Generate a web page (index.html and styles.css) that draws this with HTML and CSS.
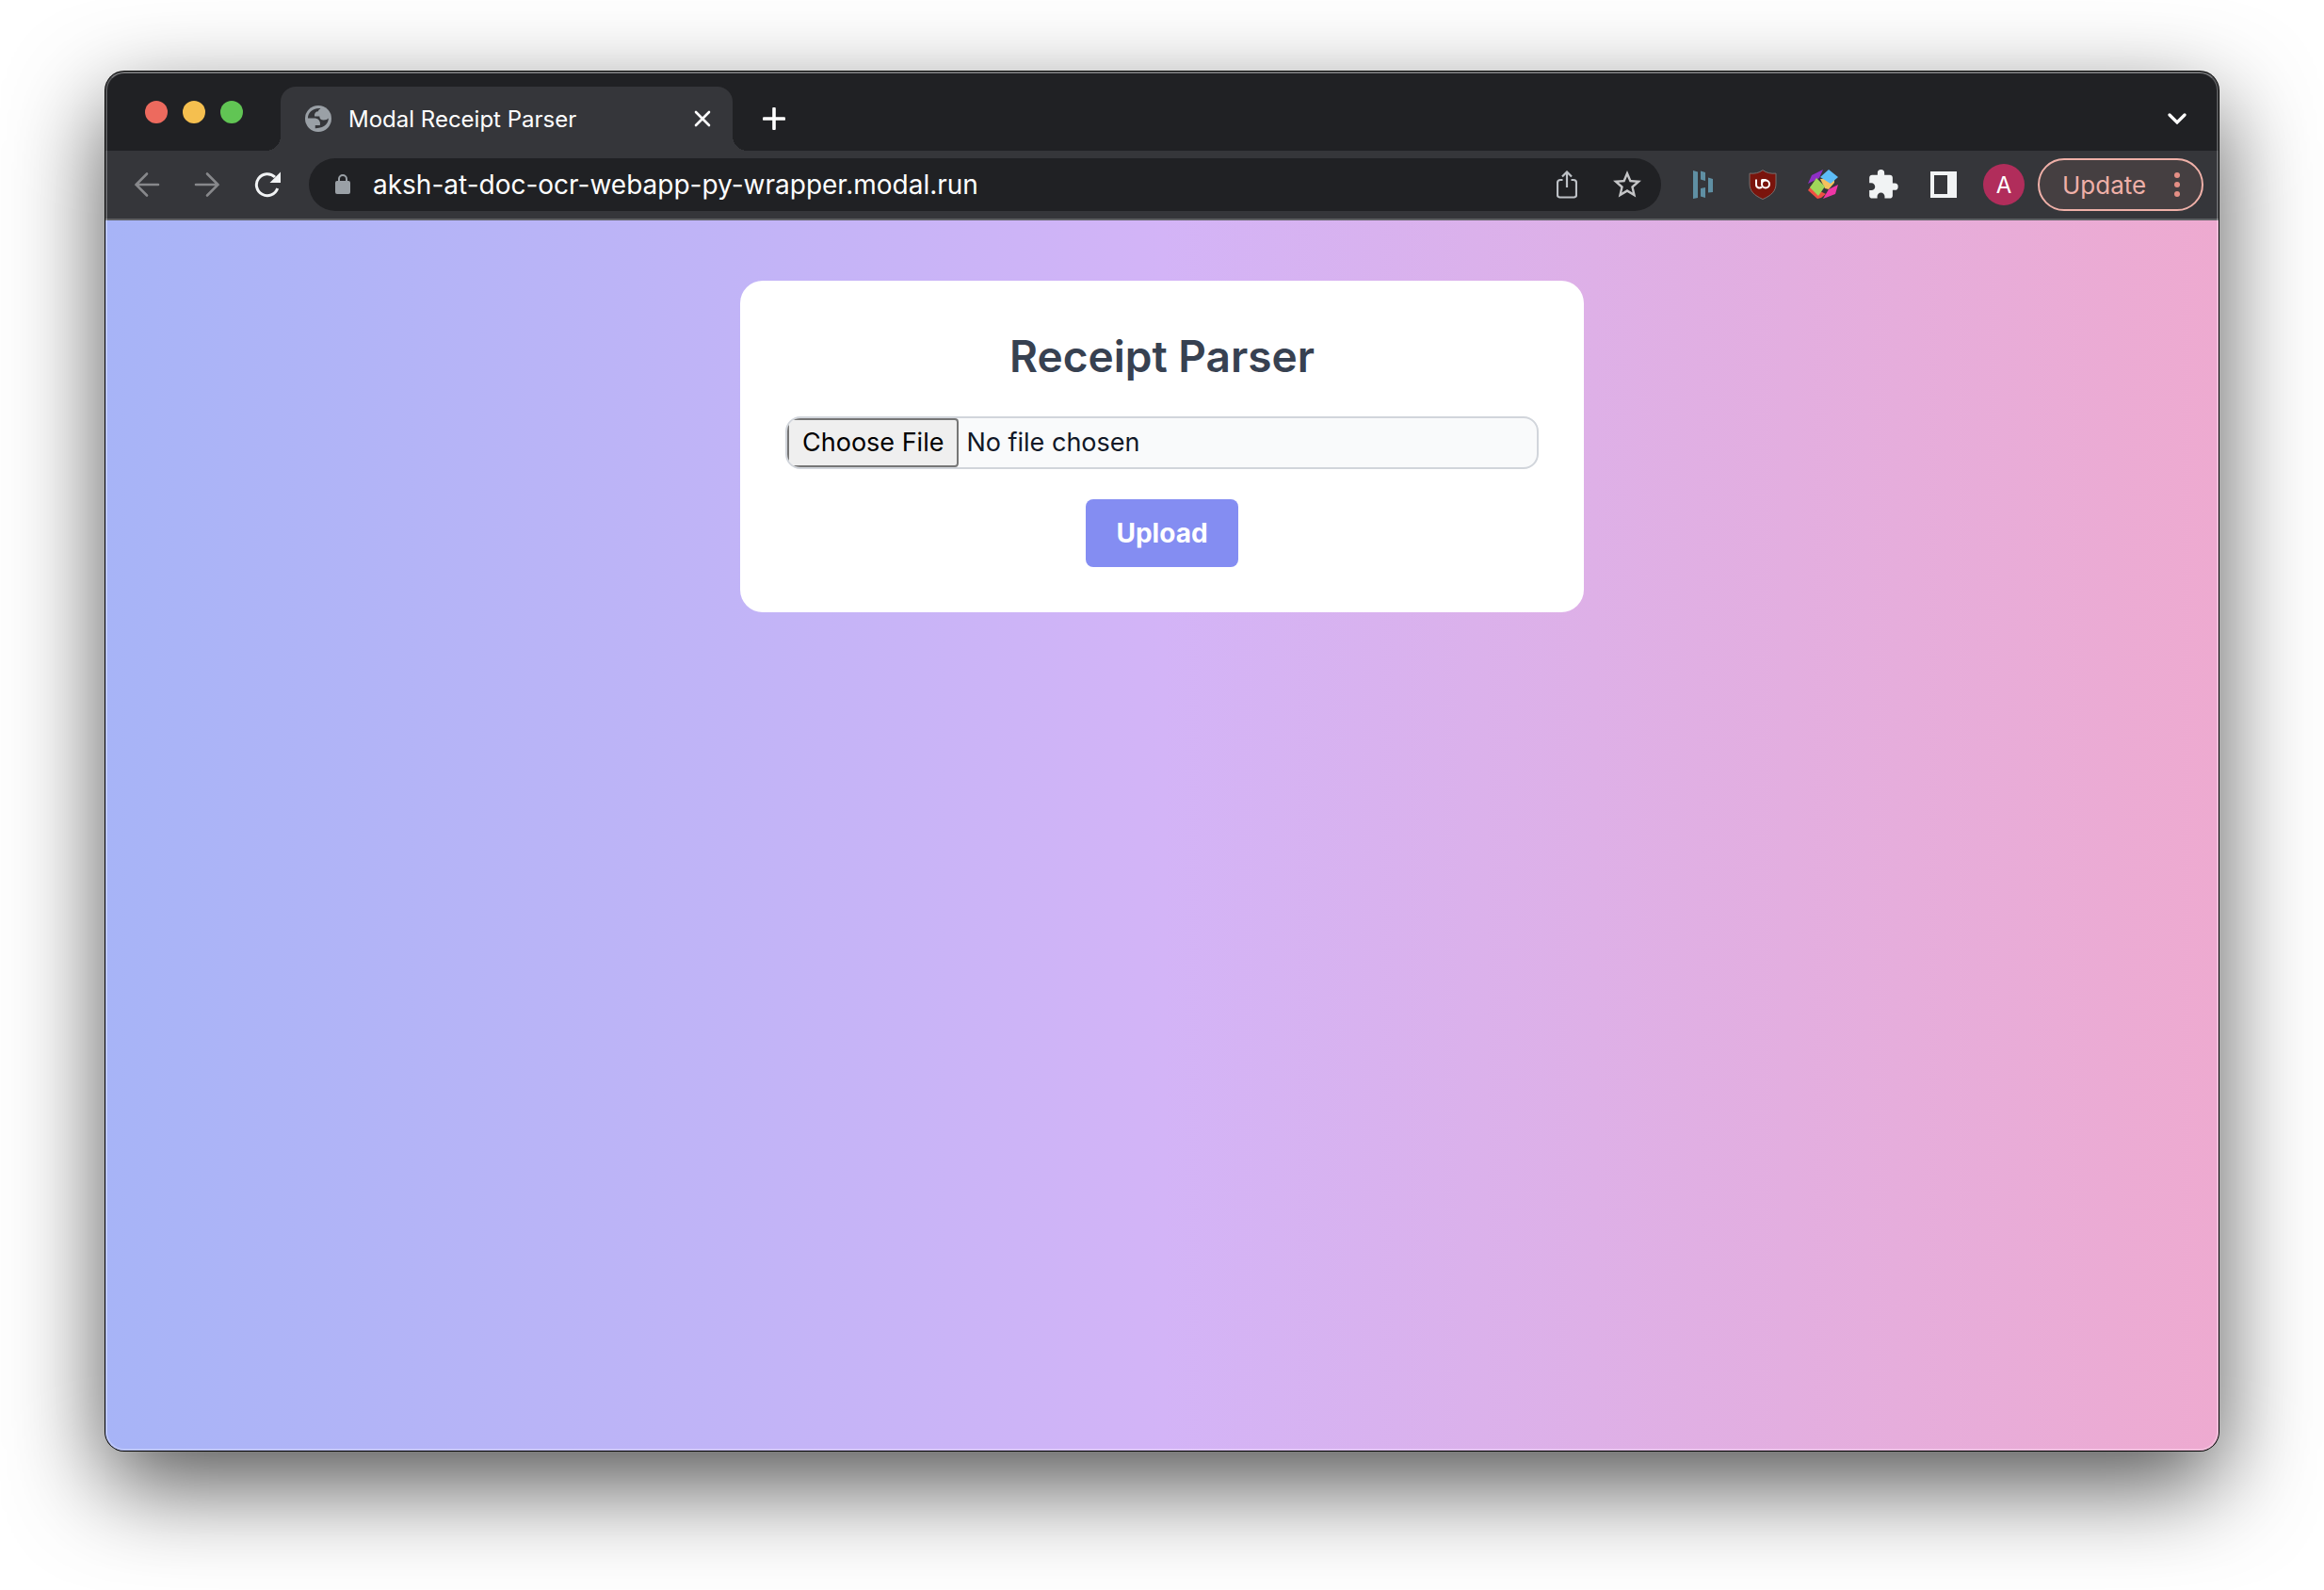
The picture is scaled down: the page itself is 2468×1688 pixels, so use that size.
FILE: index.html
```html
<!DOCTYPE html>
<html lang="en">
<head>
<meta charset="utf-8">
<title>Modal Receipt Parser</title>
<link rel="stylesheet" href="styles.css">
</head>
<body>
<div class="window">
  <header class="tabstrip">
    <div class="lights">
      <span class="light light-close"></span>
      <span class="light light-min"></span>
      <span class="light light-max"></span>
    </div>
    <div class="tab">
      <svg class="favicon" viewBox="0 0 28 28" aria-hidden="true"><circle cx="14" cy="14" r="14" fill="#9aa0a6"/><path fill="#35363a" d="M16.500 3.200C14.800 4 14 5 14 6.200c-2.800 0-4.300 2-4 5.400h5.300c0 2.700 1.600 4 4.500 4 2.300 0 4-.700 5-2C25 17.500 22 24.500 10.500 24.200V20.700h5.200c.600-4.700-1.600-7.300-6.400-7.300H2.900C3 8 8 2.400 16.500 3.200z"/><path fill="#9aa0a6" d="M3 14h6.300c4.800 0 7 2.400 6.400 7.100h-5.200v4.500C6 24 3 19 3 14z"/></svg>
      <span class="tab-title">Modal Receipt Parser</span>
      <button class="icon-button tab-close" aria-label="Close tab">
        <svg width="18" height="18" viewBox="0 0 18 18"><path d="M2 2l14 14M16 2L2 16" stroke="#fff" stroke-width="2.600" stroke-linecap="round"/></svg>
      </button>
    </div>
    <button class="icon-button new-tab" aria-label="New tab">
      <svg width="24" height="24" viewBox="0 0 24 24"><path d="M12 1.500v21M1.500 12h21" stroke="#fff" stroke-width="3.600" stroke-linecap="round"/></svg>
    </button>
    <button class="icon-button tab-search" aria-label="Search tabs">
      <svg width="20" height="12" viewBox="0 0 20 12"><path d="M2 2l8 8 8-8" fill="none" stroke="#fff" stroke-width="3.200" stroke-linecap="round"/></svg>
    </button>
  </header>
  <nav class="toolbar">
    <button class="icon-button" aria-label="Back">
      <svg width="28" height="28" viewBox="0 0 28 28"><path d="M26 14H2.500M14 2.500L2.500 14 14 25.500" fill="none" stroke="#87888b" stroke-width="2.600" stroke-linecap="round"/></svg>
    </button>
    <button class="icon-button" aria-label="Forward">
      <svg width="28" height="28" viewBox="0 0 28 28"><path d="M2 14h23.500M14 2.500L25.500 14 14 25.500" fill="none" stroke="#87888b" stroke-width="2.600" stroke-linecap="round"/></svg>
    </button>
    <button class="icon-button" aria-label="Reload">
      <svg width="28" height="28" viewBox="0 0 28 28"><path d="M24.700 18A11.500 11.500 0 1 1 22 6" fill="none" stroke="#f1f3f4" stroke-width="3"/><path d="M28 .500V12H16.500z" fill="#f1f3f4"/></svg>
    </button>
    <div class="omnibox">
      <svg width="16" height="22" viewBox="0 0 16 22" aria-hidden="true"><rect y="7" width="16" height="14" rx="2" fill="#9aa0a6"/><path d="M4 8V5a4 4 0 0 1 8 0v3" fill="none" stroke="#9aa0a6" stroke-width="2"/></svg>
      <input class="address" type="text" aria-label="Address" value="aksh-at-doc-ocr-webapp-py-wrapper.modal.run">
      <button class="icon-button" aria-label="Share">
        <svg width="22" height="30" viewBox="0 0 22 30"><path d="M6.500 10H4a3 3 0 0 0-3 3v13a2.500 2.500 0 0 0 2.500 2.500h15A2.500 2.500 0 0 0 21 26V13a3 3 0 0 0-3-3h-2.500M11 18V2M6 6.500L11 1.500l5 5" fill="none" stroke="#bdc1c6" stroke-width="2.200"/></svg>
      </button>
      <button class="icon-button" aria-label="Bookmark this page">
        <svg width="30" height="30" viewBox="2 2 20 20"><path fill="#c4c5c7" d="M22 9.240l-7.190-.620L12 2 9.190 8.630 2 9.240l5.460 4.730L5.820 21 12 17.270 18.180 21l-1.630-7.030L22 9.240zM12 15.400l-3.760 2.270 1-4.280-3.320-2.880 4.380-.380L12 6.100l1.710 4.040 4.380.380-3.320 2.880 1 4.280L12 15.400z"/></svg>
      </button>
    </div>
    <button class="icon-button" aria-label="Bars extension">
      <svg width="32" height="32" viewBox="0 0 32 32"><path fill="#5f8fa3" d="M6 1l5 1.500V30l-5 1zM14 1.500l5 1.500v9l-5-1.500zM22 8.500l5 1.500v14l-5 .500zM14 20l5-1v11l-5-1.500z"/></svg>
    </button>
    <button class="icon-button" aria-label="Content blocker">
      <svg width="32" height="32" viewBox="0 0 32 32"><path d="M16 .600c3.800 3 8.500 4 14 3.500V15c0 8-5 12.500-14 16.500C7 27.500 2 23 2 15V4.100C7.500 4.600 12.200 3.600 16 .600z" fill="#7a140c" stroke="#77706f" stroke-width="1"/><path d="M9 10.500v5.500a3.500 3.500 0 0 0 6 2.500M15 10.500v6M15 11h4.500" fill="none" stroke="#fff" stroke-width="2"/><circle cx="19" cy="15.500" r="4" fill="none" stroke="#fff" stroke-width="2"/></svg>
    </button>
    <button class="icon-button" aria-label="Color cube extension">
      <svg width="32" height="32" viewBox="0 0 32 32"><path fill="#8e2fc4" d="M0 15L4 6 16 0l-4 9z"/><path fill="#f5c15d" d="M13 10l15-1v5l-6 7-4-1z"/><path fill="#ef4f43" d="M0 22l3-4 16 8-5 4-4 1z"/><path fill="#ee36a5" d="M32 16l-3 10-13 5 6-10z"/><path fill="#5dbdf7" d="M22 0l10 8-8 7-11-7z"/><path fill="#a0d65a" d="M9 9l9 9-7 10-9-9z"/></svg>
    </button>
    <button class="icon-button" aria-label="Extensions">
      <svg width="32" height="32" viewBox="1.200 1 22 22"><path fill="#f1f3f4" d="M20.500 11H19V7c0-1.100-.900-2-2-2h-4V3.500a2.500 2.500 0 0 0-5 0V5H4c-1.100 0-1.990.900-1.990 2v3.800H3.500c1.490 0 2.700 1.210 2.700 2.700s-1.210 2.700-2.700 2.700H2V20c0 1.100.900 2 2 2h3.800v-1.500c0-1.490 1.210-2.700 2.700-2.700s2.700 1.210 2.700 2.700V22H17c1.100 0 2-.900 2-2v-4h1.500a2.500 2.500 0 0 0 0-5z"/></svg>
    </button>
    <button class="icon-button" aria-label="Side panel">
      <svg width="28" height="28" viewBox="0 0 28 28"><path fill="#f1f3f4" fill-rule="evenodd" d="M0 0h28v28H0zM4 4v20h14V4z"/></svg>
    </button>
    <button class="avatar" aria-label="Profile">A</button>
    <button class="update">Update
      <svg width="6" height="26" viewBox="0 0 6 26" aria-hidden="true"><g fill="#e58f85"><circle cx="3" cy="3" r="3"/><circle cx="3" cy="13" r="3"/><circle cx="3" cy="23" r="3"/></g></svg>
    </button>
  </nav>
  <main class="page">
    <form class="card">
      <h1 class="heading">Receipt Parser</h1>
      <input class="file" type="file" aria-label="Receipt file">
      <button class="upload" type="button">Upload</button>
    </form>
  </main>
</div>
</body>
</html>
```
FILE: styles.css
```css
* {
  box-sizing: border-box;
}

body {
  margin: 0;
  min-height: 100vh;
  padding: 76px 112px 148px;
  display: flex;
  background: #fff;
  font-family: Inter, "Liberation Sans", sans-serif;
}

button,
input {
  font: inherit;
  color: inherit;
}

button {
  border: 0;
  padding: 0;
  background: none;
}

svg {
  display: block;
}

.window {
  position: relative;
  flex: 1;
  display: flex;
  flex-direction: column;
  border-radius: 20px;
  overflow: hidden;
  background: #35363a;
  box-shadow: 0 0 0 1px #000, 0 36px 100px rgba(0, 0, 0, 0.68);
}

/* light rim along the inside of the window edge */
.window::after {
  content: "";
  position: absolute;
  inset: 0;
  border: 2px solid rgba(255, 255, 255, 0.24);
  border-top-color: rgba(255, 255, 255, 0.36);
  border-radius: 20px;
  pointer-events: none;
}

.tabstrip {
  height: 84px;
  padding: 16px 34px 0 42px;
  display: flex;
  align-items: stretch;
  background: #202124;
  color: #fff;
}

.lights {
  width: 144px;
  padding-top: 15px;
  display: flex;
  gap: 16px;
}

.light {
  width: 24px;
  height: 24px;
  border-radius: 50%;
}

.light-close { background: #ed6a5e; }
.light-min { background: #f5bf4f; }
.light-max { background: #61c554; }

.tab {
  position: relative;
  width: 480px;
  padding: 0 22px 0 26px;
  display: flex;
  align-items: center;
  border-radius: 16px 16px 0 0;
  background: #35363a;
}

.tab::before,
.tab::after {
  content: "";
  position: absolute;
  bottom: 0;
  width: 16px;
  height: 16px;
}

.tab::before {
  right: 100%;
  background: radial-gradient(circle at 0 0, transparent 16px, #35363a 16px);
}

.tab::after {
  left: 100%;
  background: radial-gradient(circle at 100% 0, transparent 16px, #35363a 16px);
}

.favicon {
  width: 28px;
  height: 28px;
}

.tab-title {
  flex: 1;
  margin-left: 18px;
  font-size: 24px;
}

.icon-button {
  display: grid;
  place-items: center;
  width: 32px;
  flex: none;
}

.tab-close {
  width: 20px;
}

.new-tab {
  margin-left: 28px;
}

.tab-search {
  margin-left: auto;
  width: 20px;
}

.toolbar {
  height: 74px;
  padding: 0 16px 0 28px;
  display: flex;
  align-items: center;
  gap: 32px;
  border-bottom: 2px solid #5f6064;
  background: #35363a;
}

.omnibox {
  flex: 1;
  height: 56px;
  margin-right: -4px;
  margin-left: -4px;
  padding: 0 20px 0 28px;
  display: flex;
  align-items: center;
  gap: 32px;
  border-radius: 28px;
  background: #202124;
}

.address {
  flex: 1;
  min-width: 0;
  margin-left: -8px;
  padding: 0;
  border: 0;
  outline: 0;
  background: none;
  color: #fff;
  font-size: 28px;
}

.avatar {
  width: 44px;
  height: 44px;
  margin: 0 -18px 0 -6px;
  border-radius: 50%;
  background: #b12d5b;
  color: #fff;
  font-size: 24px;
}

.update {
  height: 56px;
  width: 176px;
  padding: 0 23px 0 24px;
  display: flex;
  align-items: center;
  justify-content: space-between;
  border: 2px solid #efb0a8;
  border-radius: 28px;
  background: #453f41;
  color: #efb0a8;
  font-size: 26px;
}

.page {
  flex: 1;
  padding: 64px 32px;
  background: linear-gradient(to right, #a7b4f7, #d3b4f7 50%, #eeaad0);
}

.card {
  max-width: 896px;
  margin: 0 auto;
  padding: 48px;
  display: flex;
  flex-direction: column;
  align-items: center;
  gap: 32px;
  border-radius: 24px;
  background: #fff;
}

.heading {
  margin: 0;
  color: #374151;
  font-size: 46px;
  font-weight: 600;
  line-height: 64px;
}

.file {
  width: 100%;
  height: 56px;
  border: 2px solid #d1d5db;
  border-radius: 16px;
  background: #f9fafb;
  color: #111827;
  font-size: 27px;
  line-height: 52px;
}

.file::file-selector-button {
  height: 52px;
  margin: 0 8px 0 0;
  padding: 0 14px;
  border: 2px solid #767676;
  border-radius: 4px;
  background: #efefef;
  color: #000;
  font: inherit;
  line-height: 48px;
}

.upload {
  height: 72px;
  padding: 0 32px;
  border-radius: 8px;
  background: #848df2;
  color: #fff;
  font-size: 28px;
  font-weight: 700;
}
```
